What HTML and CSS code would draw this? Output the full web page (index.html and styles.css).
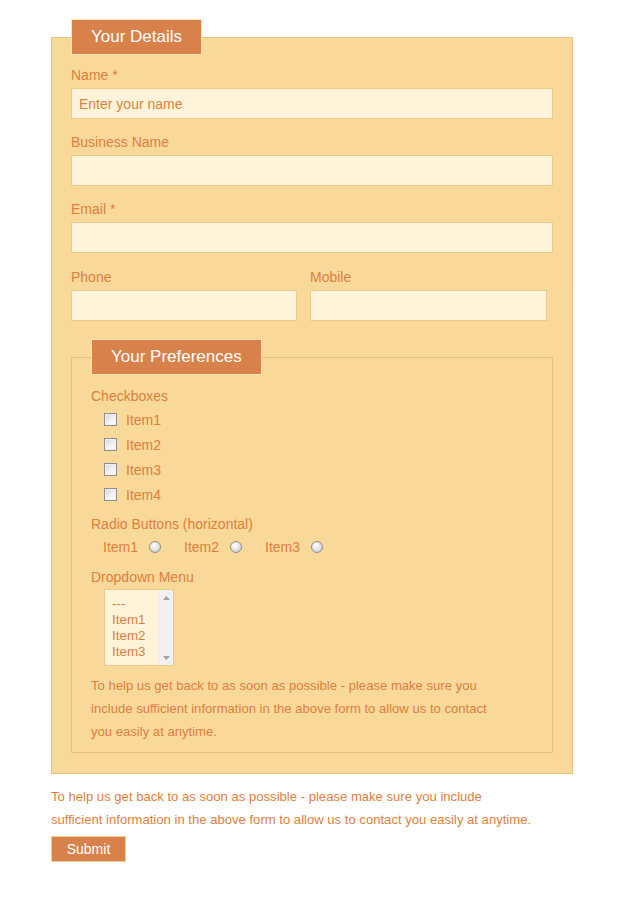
FILE: index.html
```
<!DOCTYPE html>
<html>
<head>
<meta charset="utf-8">
<link rel="stylesheet" href="styles.css">
</head>
<body>
<form class="form-wrap">
  <fieldset class="outer">
    <legend class="legend">Your Details</legend>
    <div class="field">
      <label class="label">Name *</label>
      <input class="input" type="text" placeholder="Enter your name">
    </div>
    <div class="field">
      <label class="label">Business Name</label>
      <input class="input" type="text">
    </div>
    <div class="field">
      <label class="label">Email *</label>
      <input class="input" type="text">
    </div>
    <div class="field-row">
      <div class="col">
        <label class="label">Phone</label>
        <input class="input input-phone" type="text">
      </div>
      <div class="col">
        <label class="label">Mobile</label>
        <input class="input input-mobile" type="text">
      </div>
    </div>
    <fieldset class="inner">
      <legend class="legend">Your Preferences</legend>
      <div class="group-label">Checkboxes</div>
      <div class="check-list">
        <label class="check-row"><input class="check" type="checkbox"><span>Item1</span></label>
        <label class="check-row"><input class="check" type="checkbox"><span>Item2</span></label>
        <label class="check-row"><input class="check" type="checkbox"><span>Item3</span></label>
        <label class="check-row"><input class="check" type="checkbox"><span>Item4</span></label>
      </div>
      <div class="group-label group-radio">Radio Buttons (horizontal)</div>
      <div class="radio-row">
        <label class="radio-item"><span>Item1</span><input class="radio" type="radio" name="r"></label>
        <label class="radio-item"><span>Item2</span><input class="radio" type="radio" name="r"></label>
        <label class="radio-item"><span>Item3</span><input class="radio" type="radio" name="r"></label>
      </div>
      <div class="group-label group-drop">Dropdown Menu</div>
      <div class="listbox-wrap">
        <select class="listbox" size="4">
          <option>---</option>
          <option>Item1</option>
          <option>Item2</option>
          <option>Item3</option>
          <option>Item4</option>
        </select>
        <div class="scrollbar" aria-hidden="true">
          <svg class="arrow" width="7" height="4" viewBox="0 0 7 4"><path d="M0 4 L3.5 0 L7 4 Z" fill="#a3a3a3"/></svg>
          <svg class="arrow" width="7" height="4" viewBox="0 0 7 4"><path d="M0 0 L3.5 4 L7 0 Z" fill="#a3a3a3"/></svg>
        </div>
      </div>
      <p class="note inner-note">To help us get back to as soon as possible - please make sure you include sufficient information in the above form to allow us to contact you easily at anytime.</p>
    </fieldset>
  </fieldset>
  <p class="note outer-note">To help us get back to as soon as possible - please make sure you include sufficient information in the above form to allow us to contact you easily at anytime.</p>
  <button class="submit" type="button">Submit</button>
</form>
</body>
</html>
```
FILE: styles.css
```
html, body {
  margin: 0;
  padding: 0;
  background: #ffffff;
}
body {
  font-family: "Liberation Sans", Arial, sans-serif;
  font-size: 14px;
  color: #dd7f3e;
}
.form-wrap {
  width: 522px;
  margin: 0 0 0 51px;
  padding-top: 19px;
}
.outer {
  margin: 0;
  padding: 10px 19px 20px;
  border: 1px solid #e8c27c;
  background: #f8d99a;
  min-width: 0;
}
.legend {
  box-sizing: border-box;
  height: 36px;
  padding: 0 19px;
  line-height: 34px;
  background: #d9814b;
  color: #ffffff;
  border: 1px solid #fbe4b6;
  font-size: 17px;
}
.field {
  margin-bottom: 13px;
}
.label {
  display: block;
  line-height: 20px;
  margin-bottom: 3px;
}
.input {
  display: block;
  box-sizing: border-box;
  width: 100%;
  height: 31px;
  margin: 0;
  padding: 0 7px;
  border: 1px solid #ebca8a;
  background: #fff4d9;
  font-family: inherit;
  font-size: 14px;
  color: #dd7f3e;
  outline: none;
}
.input::placeholder {
  color: #dd7f3e;
  opacity: 1;
}
.field-row {
  display: grid;
  grid-template-columns: 226px 237px;
  column-gap: 13px;
  margin-top: 14px;
  margin-bottom: 18px;
}
.inner {
  margin: 0;
  padding: 11px 19px 9px;
  border: 1px solid #e5bf7c;
  min-width: 0;
}
.group-label {
  line-height: 20px;
}
.check-list {
  margin-top: 1px;
}
.check-row {
  display: flex;
  align-items: center;
  height: 25px;
  padding-left: 13px;
}
.check {
  appearance: none;
  -webkit-appearance: none;
  box-sizing: border-box;
  width: 13px;
  height: 13px;
  margin: 0 9px 0 0;
  border: 1px solid #8f8f8f;
  background: linear-gradient(135deg, #d3d3d3 0%, #f4f4f4 60%, #fdfdfd 100%);
  box-shadow: inset 0 0 0 1px #f0f0f0;
}
.group-radio {
  margin-top: 7px;
}
.radio-row {
  display: flex;
  align-items: center;
  height: 25px;
  padding-left: 12px;
}
.radio-item {
  display: flex;
  align-items: center;
  margin-right: 23px;
}
.radio {
  appearance: none;
  -webkit-appearance: none;
  box-sizing: border-box;
  width: 12px;
  height: 12px;
  margin: 0 0 0 11px;
  border: 1px solid #8f8f8f;
  border-radius: 50%;
  background: radial-gradient(circle at 40% 35%, #ffffff 0%, #e6e6e6 45%, #c2c2c2 100%);
}
.group-drop {
  margin-top: 8px;
}
.listbox-wrap {
  display: flex;
  align-items: flex-start;
  box-sizing: border-box;
  width: 70px;
  height: 77px;
  margin: 2px 0 0 13px;
  border: 1px solid #ebca8a;
  background: #fff4d9;
}
.listbox {
  flex: 1;
  min-width: 0;
  height: 70px;
  box-sizing: border-box;
  margin: 0;
  padding: 6px 0 0 7px;
  border: 0;
  background: transparent;
  font-family: inherit;
  font-size: 13.4px;
  color: #dd7f3e;
  outline: none;
  overflow: hidden;
}
.listbox option {
  padding: 0;
  line-height: 16px;
}
.scrollbar {
  align-self: stretch;
  width: 15px;
  display: flex;
  flex-direction: column;
  justify-content: space-between;
  align-items: center;
  padding: 6px 0 5px;
  box-sizing: border-box;
  background: #f1f1f1;
  border-left: 1px solid #e9e9e9;
}
.arrow {
  display: block;
}
.note {
  margin: 0;
  line-height: 23px;
  font-size: 13.1px;
}
.inner-note {
  margin-top: 8px;
  max-width: 405px;
}
.outer-note {
  margin-top: 11px;
  max-width: 482px;
}
.submit {
  display: block;
  box-sizing: border-box;
  width: 75px;
  height: 26px;
  margin-top: 5px;
  padding: 0;
  border: 1px solid #f1cf94;
  background: #d9814b;
  color: #ffffff;
  font-family: inherit;
  font-size: 14px;
}
```
